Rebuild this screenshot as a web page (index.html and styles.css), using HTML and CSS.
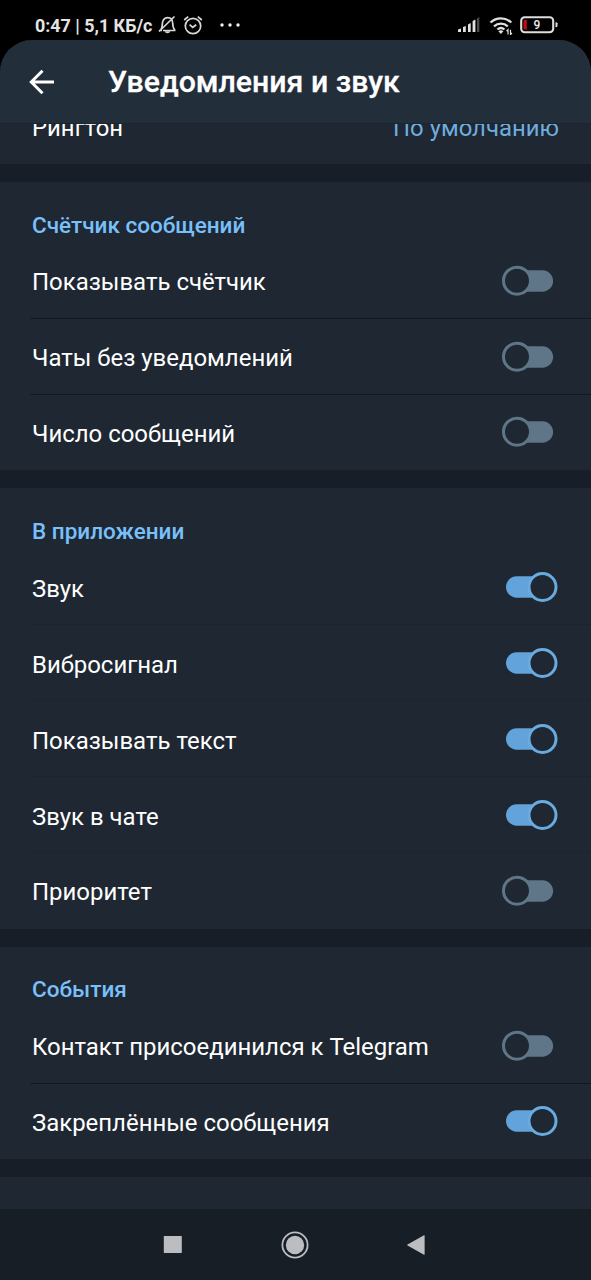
FILE: index.html
```html
<!DOCTYPE html>
<html lang="ru">
<head>
<meta charset="utf-8">
<title>Уведомления и звук</title>
<link rel="stylesheet" href="styles.css">
</head>
<body>
<svg width="0" height="0" class="defs">
  <symbol id="off" viewBox="0 0 58 32"><path class="off-fill" d="M17 5.300H42.400a10.700 10.700 0 0 1 0 21.400H17z"/><circle class="off-ring" cx="17" cy="15.700" r="13.500"/></symbol>
  <symbol id="on" viewBox="0 0 58 32"><path class="on-fill" d="M42 5.300H16.700a10.700 10.700 0 0 0 0 21.400H42z"/><circle class="on-ring" cx="42.500" cy="16" r="13.500"/></symbol>
</svg>
<div class="status">
  <span class="clock">0:47 | 5,1 КБ/с</span>
  <svg class="bell" width="18" height="20" viewBox="0 0 18 20"><path d="M3 14.500C4.800 12.500 3.700 8 5.200 5.300 6.500 3.200 8 2.600 9.700 2.600c3.600 0 5 2.600 5 5.700 0 3 .2 4.600 1.900 6.200v1H5M1 16.500 16.500 1.500M1 15.500h3"/><path class="solid" d="M6.500 16.300h6c-1 2.600-5 2.600-6 0z"/></svg>
  <svg class="alarm" width="20" height="20" viewBox="0 0 20 20"><circle cx="10" cy="11" r="7.700"/><path d="M1.200 5 5.200 1.600M18.800 5 14.800 1.600M6.600 9.600 9.700 12.300 13.300 9.700"/></svg>
  <svg class="dots" width="20" height="4" viewBox="0 0 20 4"><circle cx="2" cy="2" r="1.700"/><circle cx="10" cy="2" r="1.700"/><circle cx="18" cy="2" r="1.700"/></svg>
  <span class="grow"></span>
  <svg class="signal" width="23" height="17" viewBox="0 0 23 17"><path d="M1 16v-2.500l3-1V16zM6 16v-5l2.800-1v6zM11 16V8.500l2.700-1.500v9zM15.600 16V5l2.800-1.500V16z"/><path class="dim" d="M20 16V2.500L22.300 1v15z"/></svg>
  <svg class="wifi" width="24" height="19" viewBox="0 0 24 19"><path d="M1.500 6.500C7.500 1 16.300 1 22.300 6.500M5 10.300c4-3.700 9.800-3.700 13.800 0M8.400 13.500c2.200-1.900 4.900-1.900 7 0"/><path class="solid" d="M9.400 15.200q2.500-2 5 0L11.900 18z"/><path class="thin" d="M19 18.500v-4.800l-1.500 1.500M21.500 13.700v4.800l1.500-1.500"/></svg>
  <svg class="battery" width="38" height="18" viewBox="0 0 38 18"><rect class="case" x="1.200" y="1.200" width="32" height="15" rx="3.500"/><path class="cap" d="M35.500 6.300q2 0 2 1v3q0 1-2 1z"/><path class="charge" d="M3.500 5q0-1 1-1h2.300v9.500H4.500q-1 0-1-1z"/><text x="17" y="13.300">9</text></svg>
</div>
<div class="app">
  <header>
    <svg class="back" width="26" height="26" viewBox="0 0 26 26"><path d="M25 13H2.500M13.500 1.800 2.300 13 13.500 24.200"/></svg>
    <h1>Уведомления и звук</h1>
  </header>
  <section class="ringtone"><span>Рингтон</span><span class="value">По умолчанию</span></section>
  <section>
    <h2>Счётчик сообщений</h2>
    <div class="row"><span>Показывать счётчик</span><svg class="toggle"><use href="#off"/></svg></div>
    <div class="row"><span>Чаты без уведомлений</span><svg class="toggle"><use href="#off"/></svg></div>
    <div class="row short"><span>Число сообщений</span><svg class="toggle"><use href="#off"/></svg></div>
  </section>
  <section class="faint">
    <h2>В приложении</h2>
    <div class="row"><span>Звук</span><svg class="toggle"><use href="#on"/></svg></div>
    <div class="row"><span>Вибросигнал</span><svg class="toggle"><use href="#on"/></svg></div>
    <div class="row"><span>Показывать текст</span><svg class="toggle"><use href="#on"/></svg></div>
    <div class="row"><span>Звук в чате</span><svg class="toggle"><use href="#on"/></svg></div>
    <div class="row"><span>Приоритет</span><svg class="toggle"><use href="#off"/></svg></div>
  </section>
  <section class="events">
    <h2>События</h2>
    <div class="row"><span>Контакт присоединился к Telegram</span><svg class="toggle"><use href="#off"/></svg></div>
    <div class="row short"><span>Закреплённые сообщения</span><svg class="toggle"><use href="#on"/></svg></div>
  </section>
  <section class="next"></section>
</div>
<nav>
  <svg width="28" height="28" viewBox="0 0 28 28"><rect x="4.800" y="5" width="18" height="17" rx=".5"/></svg>
  <svg width="28" height="28" viewBox="0 0 28 28"><circle cx="14" cy="14" r="9.200"/><circle class="ring" cx="14" cy="14" r="12.600"/></svg>
  <svg width="28" height="28" viewBox="0 0 28 28"><path d="M5.500 13.500 22 4.300q.6-.3.600.3v18.800q0 .6-.6.300L5.500 14.500q-.8-.5 0-1z"/></svg>
</nav>
</body>
</html>
```
FILE: styles.css
```css
* { box-sizing: border-box; }
body { margin: 0; width: 591px; height: 1280px; overflow: hidden; display: flex; flex-direction: column; background: #000; color: #fff; font-family: Roboto, sans-serif; }
svg { display: block; flex: none; fill: none; }
.defs { position: absolute; }
.status { height: 40px; flex: none; display: flex; align-items: flex-start; padding: 15px 33px 0 35px; }
.clock { width: 118px; margin-right: 5px; font-size: 17.9px; line-height: 22px; font-weight: 700; color: #e4e4e4; white-space: nowrap; }
.bell, .alarm { stroke: #d8d8d8; stroke-width: 1.7; }
.bell .solid { fill: #d8d8d8; stroke: none; }
.alarm { margin-left: 7px; }
.dots { margin: 8px 0 0 17px; fill: #f0f0f0; }
.grow { flex: 1; }
.signal { margin: 1px 9px 0 0; fill: #e0e0e0; }
.signal .dim { fill: #4c4c4c; }
.wifi { margin: 1px 7px 0 0; stroke: #e0e0e0; stroke-width: 2.3; }
.wifi .solid { fill: #e0e0e0; stroke: none; }
.wifi .thin { stroke-width: 1.2; }
.battery { margin-top: 1px; }
.battery .case { stroke: #ddd; stroke-width: 2.1; }
.battery .cap { fill: #ddd; }
.battery .charge { fill: #c00d10; }
.battery text { fill: #eee; font: 500 12px Roboto, sans-serif; text-anchor: middle; }
.app { height: 1169px; flex: none; display: flex; flex-direction: column; background: #171e27; border-radius: 32px 32px 0 0; overflow: hidden; }
header { height: 84px; flex: none; display: flex; align-items: center; padding-left: 29px; background: #232e3b; border-bottom: 1px solid #1b2530; }
.back { stroke: #fff; stroke-width: 3; }
h1 { margin: 0 0 0 53px; font-size: 30.25px; line-height: 36px; font-weight: 500; white-space: nowrap; -webkit-text-stroke: .3px #fff; }
section { flex: none; margin-bottom: 18px; background: #1e2732; }
.ringtone { height: 40px; display: flex; justify-content: space-between; padding: 0 32px; overflow: hidden; font-size: 23.9px; line-height: 28px; }
.ringtone span { margin-top: -10px; }
.ringtone .value { color: #6fadde; }
h2 { margin: 0; height: 61px; padding: 29px 32px 0; font-size: 22.5px; line-height: 28px; font-weight: 500; color: #79c0fb; }
.events h2 { padding-top: 28px; }
.row { height: 76px; margin-left: 30px; padding: 0 33px 0 2px; display: flex; align-items: center; justify-content: space-between; border-bottom: 1px solid #121922; font-size: 23.94px; line-height: 28px; white-space: nowrap; }
.row span { padding-top: 3px; }
.row.short { height: 75px; border-color: transparent; }
.row.short span { padding-top: 4px; }
.faint .row { border-color: #1b2430; }
.faint .row span { padding-top: 5px; }
.faint .row:last-child { border-color: transparent; }
.faint .row:last-child span { padding-top: 3px; }
.toggle { width: 58px; height: 32px; }
.off-fill { fill: #5f7688; }
.off-ring { fill: #1e2732; stroke: #5f7688; stroke-width: 3; }
.on-fill { fill: #61a3da; }
.on-ring { fill: #1e2732; stroke: #6aabdf; stroke-width: 3; }
.next { height: 32px; margin: 0; }
nav { height: 71px; flex: none; display: flex; justify-content: space-between; align-items: center; padding: 0 161px 0 159px; background: #171e26; }
nav svg { fill: #bbbdc0; }
nav .ring { fill: none; stroke: #bbbdc0; stroke-width: 1.8; }
```
